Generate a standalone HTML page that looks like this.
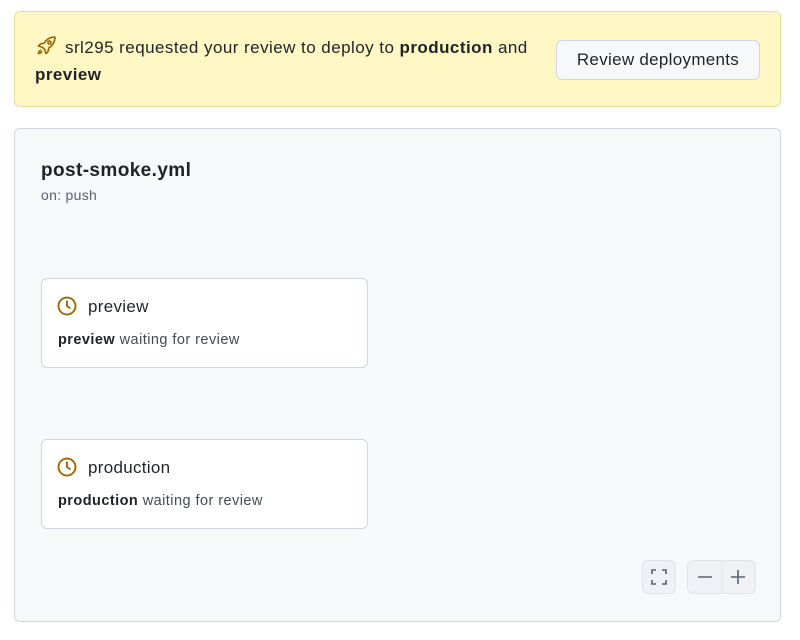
<!DOCTYPE html>
<html><head><style>
body{margin:0;width:800px;height:640px;background:#fff;font-family:"Liberation Sans",sans-serif;color:#1f2328;position:relative;overflow:hidden}
.banner{position:absolute;left:14px;top:11px;width:767px;height:96px;background:#fff8c5;border:1px solid #eadb9e;border-radius:6px;box-sizing:border-box}
.btxt{position:absolute;left:20px;top:22px;width:530px;font-size:17px;line-height:27px;letter-spacing:0.45px}
.btxt b{font-weight:bold}
.btn{position:absolute;left:541px;top:28px;width:204px;height:40px;box-sizing:border-box;border:1px solid #d0d7de;background:#f6f8fa;border-radius:6px;font-size:17px;text-align:center;line-height:38px;letter-spacing:0.3px}
.box{position:absolute;left:14px;top:128px;width:767px;height:494px;background:#f6f8fa;border:1px solid #d0d7de;border-radius:6px;box-sizing:border-box}
.t{position:absolute;left:26px;top:31px;font-size:19px;font-weight:bold;letter-spacing:0.4px}
.s{position:absolute;left:26px;top:58px;font-size:14px;color:#59636e;letter-spacing:0.3px}
.card{position:absolute;left:26px;width:327px;height:90px;background:#fff;border:1px solid #d0d7de;border-radius:6px;box-sizing:border-box}
.card .n{position:absolute;left:46px;top:18px;font-size:17px;letter-spacing:0.3px}
.card .d{position:absolute;left:16px;top:53px;font-size:14.5px;color:#424a53;letter-spacing:0.45px}
.card svg{position:absolute;left:15px;top:17px}
.ctl{position:absolute;border:1px solid #e1e4e8;background:#eff1f4;border-radius:6px;box-sizing:border-box;height:34px}
</style></head><body>
<div class="banner">
<div class="btxt"><svg width="22" height="22" viewBox="0 0 16 16" style="vertical-align:-4px;margin-right:8px" fill="none" stroke="#9a6700" stroke-width="1.2" stroke-linejoin="round"><path d="M14.5 1.5c-3.5 0-6 1.5-8 4.5L4 6.5 2.5 8l3 1 1.5 1.5 1 3L9.5 12l.5-2.5c3-2 4.5-4.5 4.5-8z"/><circle cx="10.5" cy="5.5" r="1.1"/><path d="M4.5 11c-1.2.3-2 1.3-2 2.5 1.2 0 2.2-.8 2.5-2"/></svg>srl295 requested your review to deploy to <b>production</b> and <b>preview</b></div>
<div class="btn">Review deployments</div>
</div>
<div class="box">
<div class="t">post-smoke.yml</div>
<div class="s">on: push</div>
<div class="card" style="top:149px"><svg width="20" height="20" viewBox="0 0 16 16" fill="none" stroke="#9a6700" stroke-width="1.5"><circle cx="8" cy="8" r="6.8"/><path d="M8 4.2V8l2.3 1.6" stroke-linecap="round"/></svg><div class="n">preview</div><div class="d"><span style="color:#1f2328;font-weight:bold">preview</span> waiting for review</div></div>
<div class="card" style="top:310px"><svg width="20" height="20" viewBox="0 0 16 16" fill="none" stroke="#9a6700" stroke-width="1.5"><circle cx="8" cy="8" r="6.8"/><path d="M8 4.2V8l2.3 1.6" stroke-linecap="round"/></svg><div class="n">production</div><div class="d"><span style="color:#1f2328;font-weight:bold">production</span> waiting for review</div></div>
<div class="ctl" style="left:627px;top:431px;width:34px"><svg width="32" height="32" viewBox="0 0 32 32" fill="none" stroke="#59636e" stroke-width="1.6"><path d="M9 13V9h4M19 9h4v4M23 19v4h-4M13 23H9v-4"/></svg></div>
<div class="ctl" style="left:672px;top:431px;width:69px"><svg width="68" height="32" viewBox="0 0 68 32" fill="none" stroke="#59636e" stroke-width="1.6"><path d="M10 16h14M50 9v14M43 16h14"/><path d="M34 0v34" stroke="#e1e4e8" stroke-width="1"/></svg></div>
</div>
</body></html>
